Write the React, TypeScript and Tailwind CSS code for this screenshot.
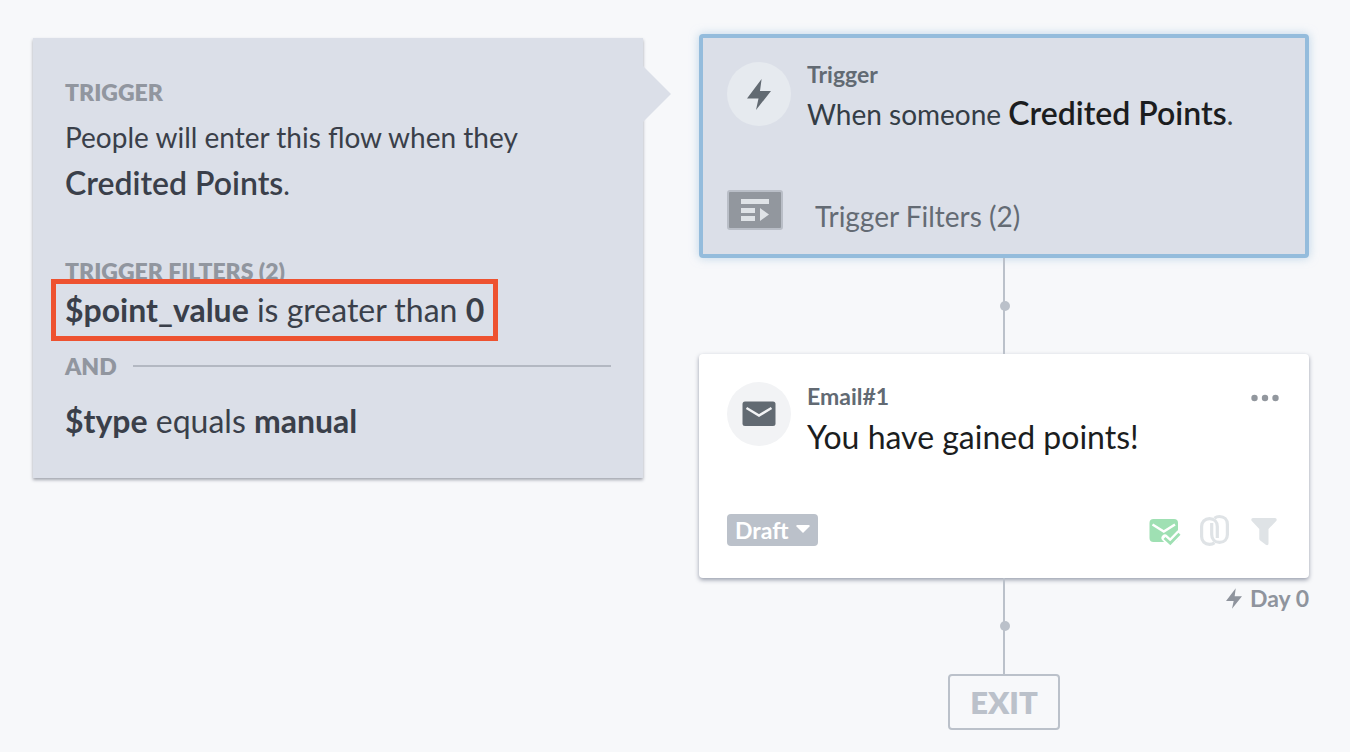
import type { ReactNode } from "react";

function BoltIcon({ className }: { className: string }) {
  return (
    <svg className={className} viewBox="0 0 24 31" fill="currentColor">
      <path d="M14.6 0L13 12H24L9 31L11.5 19.4H0Z" />
    </svg>
  );
}

function MailIcon() {
  return (
    <svg width={34} height={26} viewBox="0 0 34 26" fill="none">
      <rect x="0.5" y="0.5" width="33" height="24.5" rx="2.5" fill="#626a72" />
      <path d="M4.5 7L17 14.5L29.5 7" stroke="#f2f3f5" strokeWidth="2.5" />
    </svg>
  );
}

function FilterListIcon() {
  return (
    <svg width={56} height={40} viewBox="0 0 56 40">
      <rect x="1" y="1" width="54" height="38" rx="2" fill="#92979e" stroke="#b9bec7" strokeWidth="2" />
      <path d="M14 9H42V14H14ZM14 18H28V23H14ZM14 26H28V31H14ZM33 18L42 24.5L33 31Z" fill="#dfe3e7" />
    </svg>
  );
}

function MailCheckIcon() {
  return (
    <svg width={32} height={32} viewBox="0 0 32 32" fill="none">
      <rect x="0.5" y="5" width="28.5" height="23" rx="4" fill="#9fe0b3" />
      <path d="M3.5 10.5L14.8 17.5L26 10.5" stroke="#fff" strokeWidth="2.5" />
      <path d="M16 24L21.3 29L30.500 19.5" stroke="#fff" strokeWidth="7" strokeLinecap="round" />
      <path d="M15.5 24L21.3 29.3L30.500 19.8" stroke="#9fe0b3" strokeWidth="2.8" />
    </svg>
  );
}

function LinksIcon() {
  return (
    <svg width={32} height={32} viewBox="0 0 32 32" fill="none" stroke="#dfe3e6" strokeWidth="3.2">
      <path d="M14.5 28.8C13 30 11.5 30.4 9.5 30.4C4.8 30.4 1.6 27.2 1.6 22.5V12.500C1.6 7.800 4.8 4.600 9.5 4.600C14.2 4.600 17.3 7.800 17.3 12.500V24" />
      <path d="M14.5 4.200C16 3 17.5 2.500 19.5 2.500C24.2 2.500 27.4 5.700 27.4 10.400V20.400C27.4 25.200 24.2 28.400 19.5 28.400C14.8 28.400 11.7 25.200 11.7 20.400V9" />
    </svg>
  );
}

function FunnelIcon() {
  return (
    <svg width={26} height={32} viewBox="0 0 26 32" fill="#dfe3e6">
      <path d="M2 4H24C25.6 4 26.2 5.8 25.2 6.9L17.5 15V29.5C17.5 31.2 16 31.6 14.8 30.7L9.2 26.6C8.6 26.1 8.3 25.6 8.3 24.8V15L0.8 6.9C-0.2 5.8 0.4 4 2 4Z" />
    </svg>
  );
}

function Connector() {
  return (
    <div className="relative h-24 w-0.5 bg-[#bbc1ca]">
      <span className="absolute top-[43px] -left-[3px] size-2.5 rounded-full bg-[#bbc1ca]" />
    </div>
  );
}

function IconCircle({ className, children }: { className: string; children: ReactNode }) {
  return (
    <div className={`flex size-16 shrink-0 items-center justify-center rounded-full ${className}`}>
      {children}
    </div>
  );
}

function TriggerDetails() {
  return (
    <aside className="relative mt-[38px] self-start bg-[#dbdfe8] px-8 pt-[38px] pb-[34px] text-[#3a3f4a] shadow-[0_2px_3px_rgba(60,65,85,0.45)]">
      <span className="absolute top-7 left-full border-y-28 border-l-28 border-y-transparent border-l-[#dbdfe8]" />
      <h2 className="text-[23px] leading-8 font-extrabold text-[#91969f]">TRIGGER</h2>
      <p className="mt-1.5 text-[28px] leading-[46px]">
        People will enter this flow when they
        <br />
        <b className="text-[32px] font-semibold">Credited Points</b>.
      </p>

      <h2 className="mt-12 text-[23px] leading-8 font-extrabold text-[#91969f]">TRIGGER FILTERS (2)</h2>
      <p className="relative w-fit text-[32px] leading-[46px]">
        <b className="font-bold">$point_value</b> is greater than <b className="font-bold">0</b>
        <span className="absolute -inset-x-3.5 -inset-y-2 border-5 border-[#ee5230]" />
      </p>
      <div className="mt-[17px] flex items-center gap-4">
        <span className="text-[23px] leading-8 font-extrabold text-[#91969f]">AND</span>
        <span className="h-0.5 flex-1 bg-[#b3b8c2]" />
      </div>
      <p className="mt-4 text-[32px] leading-[46px]">
        <b className="font-bold">$type</b> equals <b className="font-bold">manual</b>
      </p>
    </aside>
  );
}

function TriggerCard() {
  return (
    <section className="w-full rounded border-4 border-[#94bcdc] bg-[#dbdfe8] p-6 shadow-[0_0_10px_rgba(148,188,220,0.6)]">
      <div className="flex gap-4">
        <IconCircle className="bg-[#e6eaef] text-[#626a72]">
          <BoltIcon className="h-[31px] w-6" />
        </IconCircle>
        <div>
          <h3 className="text-[23px] leading-6 font-bold text-[#626a73]">Trigger</h3>
          <p className="mt-1 text-[28px] leading-[46px] text-[#343d46]">
            When someone <b className="text-[32px] font-semibold text-[#1b1d20]">Credited Points</b>.
          </p>
        </div>
      </div>
      <div className="mt-[53px] flex items-center gap-8">
        <FilterListIcon />
        <span className="pt-3 text-[28px] leading-7 text-[#646b74]">Trigger Filters (2)</span>
      </div>
    </section>
  );
}

function EmailCard() {
  return (
    <section className="w-full rounded bg-white px-7 pt-7 pb-8 shadow-[0_2px_4px_rgba(60,70,95,0.5)]">
      <div className="flex gap-4">
        <IconCircle className="bg-[#f2f3f5]">
          <MailIcon />
        </IconCircle>
        <div className="flex-1">
          <h3 className="text-[23px] leading-7 font-bold text-[#626a73]">Email#1</h3>
          <p className="mt-1 text-[32px] leading-[46px] text-[#1b1d20]">You have gained points!</p>
        </div>
        <button type="button" aria-label="More options" className="self-start py-3">
          <svg width={32} height={8} viewBox="0 0 32 8" fill="#92979e">
            <circle cx="5.5" cy="4" r="3.2" />
            <circle cx="16" cy="4" r="3.2" />
            <circle cx="26.5" cy="4" r="3.2" />
          </svg>
        </button>
      </div>
      <div className="mt-[54px] flex items-center">
        <div className="relative">
          <select
            aria-label="Email status"
            className="h-8 w-[91px] appearance-none rounded bg-[#bbc1ca] pl-2 text-[23px] leading-8 font-bold text-white"
          >
            <option>Draft</option>
          </select>
          <svg className="pointer-events-none absolute top-[11px] right-2" width={14} height={8} viewBox="0 0 14 8" fill="#fff">
            <path d="M1 0H13L14 1L7 8L0 1Z" />
          </svg>
        </div>
        <div className="mr-1 ml-auto flex gap-[19px]">
          <button type="button" aria-label="Smart sending"><MailCheckIcon /></button>
          <button type="button" aria-label="Tracking"><LinksIcon /></button>
          <button type="button" aria-label="Filters"><FunnelIcon /></button>
        </div>
      </div>
    </section>
  );
}

export default function App() {
  return (
    <main className="grid min-h-screen grid-cols-2 gap-14 bg-[#f7f8fa] pr-[41px] pl-[33px] font-['Lato','Liberation_Sans',sans-serif]">
      <TriggerDetails />
      <div className="flex flex-col items-center pt-[34px] pb-5">
        <TriggerCard />
        <Connector />
        <EmailCard />
        <div className="grid w-full grid-cols-[1fr_auto_1fr]">
          <span />
          <Connector />
          <span className="flex items-center gap-2 self-start justify-self-end pt-1 text-[23px] leading-8 font-bold text-[#8f949d]">
            <BoltIcon className="h-[21px] w-4" />
            Day 0
          </span>
        </div>
        <div className="rounded border-2 border-[#bbc1ca] px-5 text-[31px] leading-[52px] font-extrabold text-[#bbc1ca]">
          EXIT
        </div>
      </div>
    </main>
  );
}
